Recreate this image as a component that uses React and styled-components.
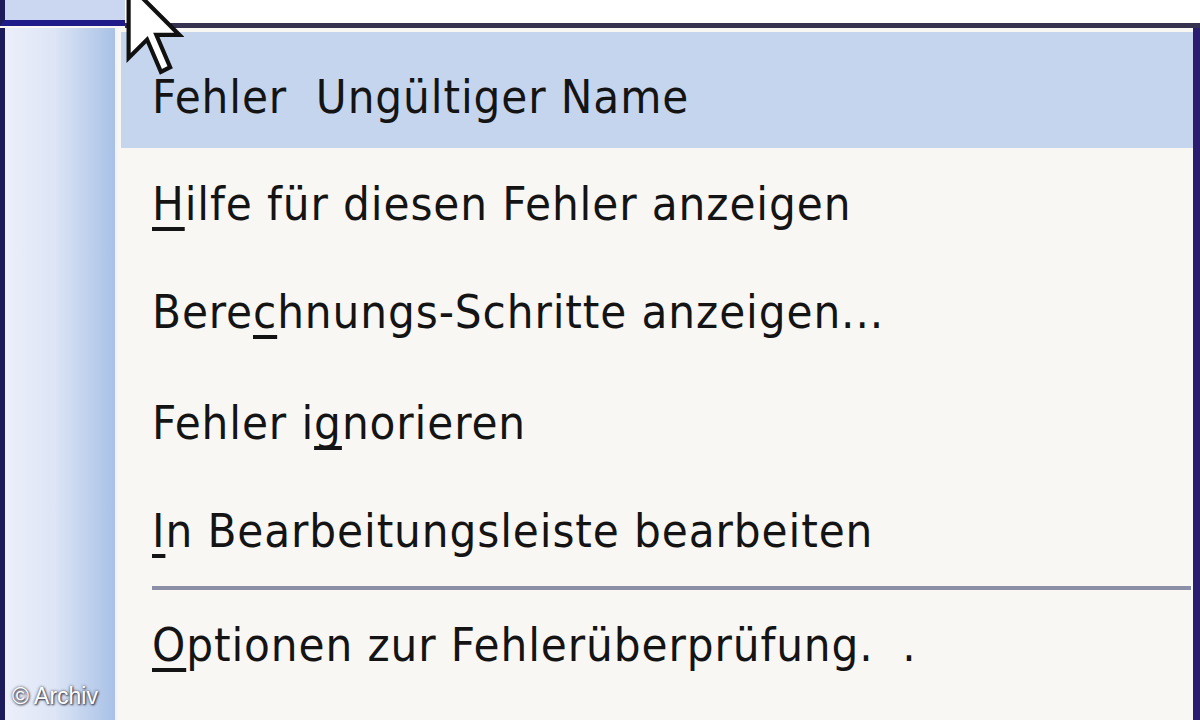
import styled, { createGlobalStyle } from "styled-components";

const GlobalStyle = createGlobalStyle`
  html, body {
    margin: 0;
    padding: 0;
    width: 1200px;
    height: 720px;
    overflow: hidden;
    background: #f9f7f4;
  }
`;

const Screen = styled.div`
  position: relative;
  width: 1200px;
  height: 720px;
  display: flex;
  flex-direction: column;
  background: #f9f7f4;
  overflow: hidden;
`;

const TopStrip = styled.div`
  display: flex;
  height: 28px;
  flex-shrink: 0;
`;

const RowHeaderCell = styled.div`
  width: 125px;
  box-sizing: border-box;
  border-left: 5px solid #1d1a5c;
  background: #cbd7f1;
  border-bottom: 6px solid #1f1c8a;
  margin-bottom: 2px;
`;

const FormulaField = styled.div`
  flex: 1;
  background: #ffffff;
  border-bottom: 5px solid #34324e;
`;

const MenuArea = styled.div`
  flex: 1;
  display: flex;
`;

const Gutter = styled.div`
  width: 115px;
  box-sizing: border-box;
  border-left: 5px solid #1d1a5c;
  background: linear-gradient(to right, #eceffa 0%, #dde5f6 45%, #a8c1e6 100%);
`;

const MenuBody = styled.div`
  flex: 1;
  display: flex;
  flex-direction: column;
  padding: 4px 0 0 3px;
  border-left: 3px solid #f2f4fb;
  border-right: 7px solid #2a1c6e;
  background: #f9f7f4;
`;

const Item = styled.div`
  display: flex;
  align-items: center;
  box-sizing: border-box;
  height: ${(p) => p.h}px;
  padding-left: 31px;
  padding-top: ${(p) => p.pad || 0}px;
  background: ${(p) => (p.active ? "#c6d5ee" : "transparent")};
  font-family: "DejaVu Sans Condensed", "DejaVu Sans", sans-serif;
  font-stretch: condensed;
  font-size: 47px;
  color: #141414;
  white-space: pre;
  letter-spacing: 0.9px;
`;

const Key = styled.span`
  text-decoration: underline;
  text-decoration-thickness: 4px;
  text-underline-offset: 7px;
  text-decoration-skip-ink: none;
`;

const Separator = styled.div`
  height: 4px;
  margin: 6px 2px 4px 31px;
  background: #8b90a6;
`;

const Cursor = styled.svg`
  position: absolute;
  left: 124px;
  top: -22px;
`;

const Watermark = styled.div`
  position: absolute;
  left: 12px;
  bottom: 10px;
  font-family: "Liberation Sans", Arial, sans-serif;
  font-size: 23px;
  color: #ffffff;
  text-shadow: 0 0 3px #3a3a4a, 1px 1px 2px #3a3a4a;
`;

const items = [
  { h: 116, pad: 12, active: true, parts: ["Fehler  Ungültiger Name"] },
  { h: 108, pad: 2, parts: [<Key key="k">H</Key>, "ilfe für diesen Fehler anzeigen"] },
  { h: 108, pad: 2, parts: ["Bere", <Key key="k">c</Key>, "hnungs-Schritte anzeigen..."] },
  { h: 108, pad: 8, parts: ["Fehler i", <Key key="k">g</Key>, "norieren"] },
  { h: 108, pad: 8, parts: [<Key key="k">I</Key>, "n Bearbeitungsleiste bearbeiten"] },
];

export default function App() {
  return (
    <>
      <GlobalStyle />
      <Screen>
        <TopStrip>
          <RowHeaderCell />
          <FormulaField />
        </TopStrip>
        <MenuArea>
          <Gutter />
          <MenuBody>
            {items.map((it, i) => (
              <Item key={i} h={it.h} pad={it.pad} active={it.active}>
                {it.parts}
              </Item>
            ))}
            <Separator />
            <Item h={100}>
              <Key>O</Key>ptionen zur Fehlerüberprüfung.  .
            </Item>
          </MenuBody>
        </MenuArea>
        <Cursor width="60" height="100" viewBox="0 0 13 21">
          <path
            d="M1 1 L1 17 L5 13 L8 20 L10 19 L7 12 L12 12 Z"
            fill="#ffffff"
            stroke="#111111"
            strokeWidth="0.9"
            strokeLinejoin="miter"
          />
        </Cursor>
        <Watermark>© Archiv</Watermark>
      </Screen>
    </>
  );
}
